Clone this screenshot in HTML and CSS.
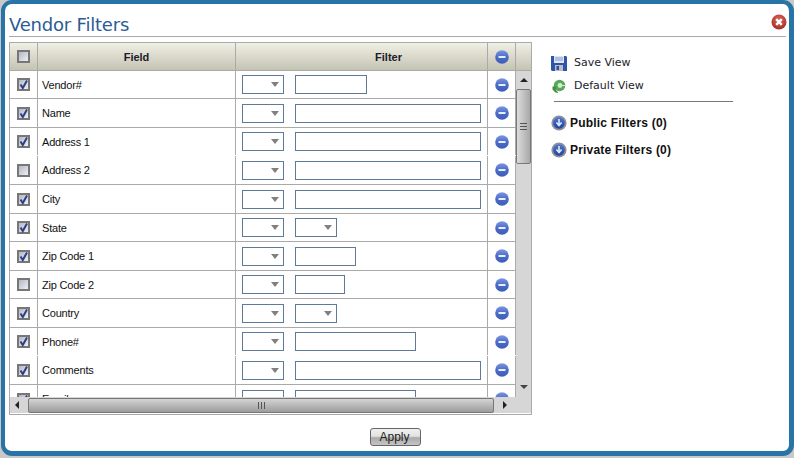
FILE: index.html
```html
<!DOCTYPE html>
<html lang="en">
<head>
<meta charset="utf-8">
<title>Vendor Filters</title>
<link rel="stylesheet" href="styles.css">
</head>
<body>
<svg class="defs" width="0" height="0" aria-hidden="true">
  <defs>
    <linearGradient id="blueG" x1="0" y1="0" x2="0" y2="1"><stop offset="0" stop-color="#7d97e0"/><stop offset=".5" stop-color="#4a6bc8"/><stop offset="1" stop-color="#3c5eb8"/></linearGradient>
    <linearGradient id="navyG" x1="0" y1="0" x2="0" y2="1"><stop offset="0" stop-color="#4f78d0"/><stop offset="1" stop-color="#20409a"/></linearGradient>
    <radialGradient id="redG" cx=".5" cy=".35" r=".7"><stop offset="0" stop-color="#e0685a"/><stop offset="1" stop-color="#9c2a20"/></radialGradient>
    <symbol id="minus" viewBox="0 0 14 14"><circle cx="7" cy="7" r="6.8" fill="url(#blueG)"/><rect x="3.5" y="6" width="7" height="2" fill="#e8eefc"/></symbol>
    <symbol id="tick" viewBox="0 0 13 13"><path d="M3.5 6.5 L5.8 10 L10 2.5" fill="none" stroke="#2d3f86" stroke-width="2"/></symbol>
    <symbol id="down" viewBox="0 0 16 16"><circle cx="8" cy="8" r="7.6" fill="#8c8f9c"/><circle cx="8" cy="8" r="5.8" fill="url(#navyG)"/><path d="M8 4v6M5.4 7.6 8 10.6l2.6-3" fill="none" stroke="#dfe8fb" stroke-width="1.6"/></symbol>
  </defs>
</svg>
<main class="window">
  <header class="titlebar">
    <h1 class="title">Vendor Filters</h1>
    <svg class="close" width="16" height="16" viewBox="0 0 16 16" role="img" aria-label="Close"><circle cx="8" cy="8" r="7.5" fill="url(#redG)"/><path d="M5.2 5.2l5.6 5.6M10.8 5.2l-5.6 5.6" stroke="#fff" stroke-width="2.4"/></svg>
  </header>
  <div class="content">
    <section class="grid">
      <div class="cols head">
        <div class="cell chk"><span class="box"></span></div>
        <div class="cell th">Field</div>
        <div class="cell th th-filter">Filter</div>
        <div class="cell chk"><svg class="minus"><use href="#minus"/></svg></div>
        <div class="cell spacer"></div>
      </div>
      <div class="middle">
        <div class="rows">
          <div class="row s"><div class="cell chk"><span class="box"><svg class="tick"><use href="#tick"/></svg></span></div><div class="cell name">Vendor#</div><div class="cell filter"><span class="sel"></span><span class="inp w72"></span></div><div class="cell chk"><svg class="minus"><use href="#minus"/></svg></div></div>
          <div class="row"><div class="cell chk"><span class="box"><svg class="tick"><use href="#tick"/></svg></span></div><div class="cell name">Name</div><div class="cell filter"><span class="sel"></span><span class="inp w186"></span></div><div class="cell chk"><svg class="minus"><use href="#minus"/></svg></div></div>
          <div class="row s nosep"><div class="cell chk"><span class="box"><svg class="tick"><use href="#tick"/></svg></span></div><div class="cell name">Address 1</div><div class="cell filter"><span class="sel"></span><span class="inp w186"></span></div><div class="cell chk"><svg class="minus"><use href="#minus"/></svg></div></div>
          <div class="row"><div class="cell chk"><span class="box"></span></div><div class="cell name">Address 2</div><div class="cell filter"><span class="sel"></span><span class="inp w186"></span></div><div class="cell chk"><svg class="minus"><use href="#minus"/></svg></div></div>
          <div class="row"><div class="cell chk"><span class="box"><svg class="tick"><use href="#tick"/></svg></span></div><div class="cell name">City</div><div class="cell filter"><span class="sel"></span><span class="inp w186"></span></div><div class="cell chk"><svg class="minus"><use href="#minus"/></svg></div></div>
          <div class="row s"><div class="cell chk"><span class="box"><svg class="tick"><use href="#tick"/></svg></span></div><div class="cell name">State</div><div class="cell filter"><span class="sel"></span><span class="sel"></span></div><div class="cell chk"><svg class="minus"><use href="#minus"/></svg></div></div>
          <div class="row"><div class="cell chk"><span class="box"><svg class="tick"><use href="#tick"/></svg></span></div><div class="cell name">Zip Code 1</div><div class="cell filter"><span class="sel"></span><span class="inp w61"></span></div><div class="cell chk"><svg class="minus"><use href="#minus"/></svg></div></div>
          <div class="row s"><div class="cell chk"><span class="box"></span></div><div class="cell name">Zip Code 2</div><div class="cell filter"><span class="sel"></span><span class="inp w50"></span></div><div class="cell chk"><svg class="minus"><use href="#minus"/></svg></div></div>
          <div class="row"><div class="cell chk"><span class="box"><svg class="tick"><use href="#tick"/></svg></span></div><div class="cell name">Country</div><div class="cell filter"><span class="sel"></span><span class="sel"></span></div><div class="cell chk"><svg class="minus"><use href="#minus"/></svg></div></div>
          <div class="row s nosep"><div class="cell chk"><span class="box"><svg class="tick"><use href="#tick"/></svg></span></div><div class="cell name">Phone#</div><div class="cell filter"><span class="sel"></span><span class="inp w121"></span></div><div class="cell chk"><svg class="minus"><use href="#minus"/></svg></div></div>
          <div class="row"><div class="cell chk"><span class="box"><svg class="tick"><use href="#tick"/></svg></span></div><div class="cell name">Comments</div><div class="cell filter"><span class="sel"></span><span class="inp w186"></span></div><div class="cell chk"><svg class="minus"><use href="#minus"/></svg></div></div>
          <div class="row last"><div class="cell chk"><span class="box"><svg class="tick"><use href="#tick"/></svg></span></div><div class="cell name">Email</div><div class="cell filter"><span class="sel"></span><span class="inp w121"></span></div><div class="cell chk"><svg class="minus"><use href="#minus"/></svg></div></div>
        </div>
        <div class="vscroll">
          <span class="arrow up"></span>
          <div class="vthumb"><span class="grip-h"></span></div>
          <span class="arrow dn"></span>
        </div>
      </div>
      <div class="hscroll">
        <span class="arrow lf"></span>
        <div class="hthumb"><span class="grip-v"></span></div>
        <span class="arrow rt"></span>
      </div>
    </section>
    <aside class="side">
      <div class="view">
        <svg class="vicon" width="16" height="16" viewBox="0 0 16 16"><path d="M0 1h15l1 1v14H1l-1-1z" fill="#2f55a8"/><rect x="3" y="1" width="10" height="7" fill="#dfe7f5"/><path d="M4 3h8M4 5h8" stroke="#7c97cf"/><rect x="4" y="10" width="8" height="6" fill="#b9bfca"/><rect x="5.5" y="11" width="2.5" height="4" fill="#2f4f96"/></svg>
        <span>Save View</span>
      </div>
      <div class="view">
        <svg class="vicon" width="16" height="16" viewBox="0 0 16 16"><circle cx="8.5" cy="7.5" r="5.8" fill="#5aa85a"/><circle cx="9" cy="7.5" r="2.4" fill="#d4ecd0"/><path d="M9 7.5h5" stroke="#d4ecd0" stroke-width="1"/><path d="M1.5 8.5h4l-1 3 3 3.5-3-.5-3-3z" fill="#3f8f3f"/></svg>
        <span>Default View</span>
      </div>
      <hr class="rule">
      <div class="group"><svg class="gicon"><use href="#down"/></svg><span>Public Filters (0)</span></div>
      <div class="group"><svg class="gicon"><use href="#down"/></svg><span>Private Filters (0)</span></div>
    </aside>
  </div>
  <footer class="foot"><button class="apply" type="button">Apply</button></footer>
</main>
</body>
</html>
```
FILE: styles.css
```css
* { box-sizing: border-box; }
html, body { margin: 0; padding: 0; }
body { width: 794px; height: 458px; background: #c9c9c9; overflow: hidden; font-family: "Liberation Sans", Arial, sans-serif; color: #111; }
.defs { display: block; height: 0; }
.window { width: 793px; height: 456px; margin-left: 1px; background: #fff; border: solid #2874a6; border-width: 4px 5px 5px 4px; border-radius: 11px; display: flex; flex-direction: column; }
.titlebar { height: 33px; margin: 0 3px 0 4px; border-bottom: 1px solid #a9a9a9; display: flex; justify-content: space-between; align-items: flex-start; }
.title { margin: 10px 0 0; font: normal 18px/22px "DejaVu Sans", sans-serif; color: #2b5c94; letter-spacing: -.2px; }
.close { margin-top: 10px; margin-right: -1px; }
.content { display: flex; margin: 5px 0 0 4px; }
.grid { width: 523px; height: 373px; border: 1px solid #aaa; display: flex; flex-direction: column; flex: none; }
.cols { display: grid; grid-template-columns: 28px 198px 252px 28px 15px; }
.head { height: 28px; border-bottom: 1px solid #aaa; background: linear-gradient(#f1f0e5, #dcdbce 45%, #c4c4b4); flex: none; }
.cell { display: flex; align-items: center; border-right: 1px solid #aaa; min-width: 0; }
.spacer { border-right: 0; }
.chk { justify-content: center; }
.th { justify-content: center; font-size: 11px; font-weight: bold; color: #1c1c2a; }
.th-filter { padding-left: 54px; }
.middle { display: flex; height: 326px; flex: none; }
.rows { width: 506px; overflow: hidden; flex: none; }
.row { display: grid; grid-template-columns: 28px 198px 252px 28px; height: 29px; border-bottom: 1px solid #aaa; }
.row.s { height: 28px; }
.row.nosep { border-bottom-color: #fff; }
.name { padding-left: 4px; font-size: 11px; letter-spacing: -.2px; color: #111; }
.last .name { align-items: flex-start; padding-top: 8px; }
.filter { padding-left: 6px; gap: 11px; }
.box { width: 13px; height: 13px; border: 2px solid #777; background: linear-gradient(135deg, #b4b7c2, #eef0f4); display: block; position: relative; }
.tick { width: 13px; height: 13px; margin: -2px; display: block; }
.minus { width: 14px; height: 14px; display: block; }
.sel { width: 42px; height: 19px; border: 1px solid #5f7a96; background: #fff; display: block; position: relative; flex: none; }
.sel::after { content: ""; position: absolute; right: 4px; top: 6px; border: solid transparent; border-width: 5px 4px 0; border-top-color: #808080; }
.inp { height: 19px; border: 1px solid #5f7a96; background: #fff; display: block; flex: none; }
.w50 { width: 50px; }
.w61 { width: 61px; }
.w72 { width: 72px; }
.w121 { width: 121px; }
.w186 { width: 186px; }
.vscroll { width: 15px; background: #d6d6d6; display: flex; flex-direction: column; align-items: center; flex: none; }
.arrow { display: block; width: 0; height: 0; border: solid transparent; flex: none; }
.arrow.up { border-width: 0 4px 4px; border-bottom-color: #222; margin-top: 7px; }
.arrow.dn { border-width: 4px 4px 0; border-top-color: #444; margin-top: 221px; }
.vthumb { width: 15px; height: 75px; margin-top: 7px; border: 1px solid #777; border-radius: 2px; background: linear-gradient(90deg, #dcdcdc, #a8a8a8); display: flex; align-items: center; justify-content: center; flex: none; }
.grip-h { width: 7px; height: 7px; background: repeating-linear-gradient(#555 0 1px, transparent 1px 3px); display: block; }
.hscroll { height: 16px; background: #d6d6d6; display: flex; align-items: center; flex: none; }
.arrow.lf { border-width: 4px 4px 4px 0; border-right-color: #222; margin-left: 5px; }
.arrow.rt { border-width: 4px 0 4px 4px; border-left-color: #222; margin-left: 9px; }
.hthumb { width: 466px; height: 15px; margin-left: 9px; border: 1px solid #777; border-radius: 2px; background: linear-gradient(#d4d4d4, #9c9c9c); display: flex; align-items: center; justify-content: center; flex: none; }
.grip-v { width: 7px; height: 7px; background: repeating-linear-gradient(90deg, #555 0 1px, transparent 1px 3px); display: block; }
.side { margin-left: 19px; width: 200px; }
.view { display: flex; align-items: center; height: 23px; font: 11px "DejaVu Sans", sans-serif; color: #1c1c2a; gap: 7px; }
.view:first-child { margin-top: 9px; }
.vicon { flex: none; }
.rule { width: 179px; margin: 4px 0 0 3px; border: 0; border-top: 1px solid #777; }
.group { display: flex; align-items: center; height: 27px; font-size: 12px; letter-spacing: .2px; font-weight: bold; color: #111; gap: 3px; }
.rule + .group { margin-top: 7px; }
.gicon { width: 16px; height: 16px; flex: none; }
.foot { display: flex; justify-content: center; margin-top: 13px; padding-right: 3px; }
.apply { width: 51px; height: 18px; padding: 0 2px 0 0; border: 1px solid #666; border-radius: 3px; background: linear-gradient(#f0f0f0 0, #e2e2e2 45%, #a9a9a9 55%, #c6c6c6); font: 12px "Liberation Sans", sans-serif; color: #222; }
```
